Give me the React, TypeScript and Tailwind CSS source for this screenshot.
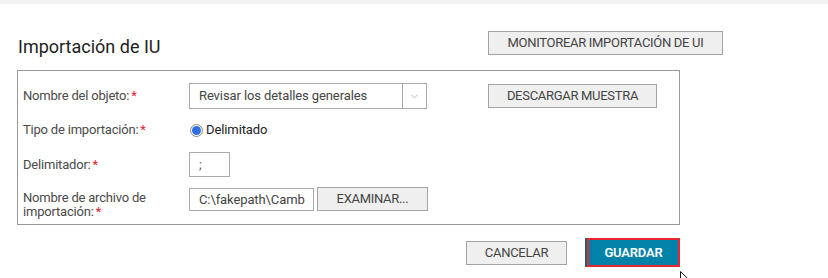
import { ChevronDown } from "lucide-react";

const font = "font-['Roboto','Liberation_Sans',sans-serif]";

function Label({ text, lines }: { text: React.ReactNode; lines?: boolean }) {
  return (
    <div
      className={`w-[171px] shrink-0 pl-[5px] text-[13px] tracking-[-0.2px] text-[#4a4a4a] ${
        lines ? "mt-[4px] leading-[14px]" : ""
      }`}
    >
      {text}
      <span className="ml-[2px] text-[#e3262f]">*</span>
    </div>
  );
}

function GrayButton({ children, className }: { children: React.ReactNode; className: string }) {
  return (
    <button
      className={`h-[24px] shrink-0 border border-[#a3a3a3] bg-[#efefef] text-[13px] tracking-[-0.3px] text-[#444] ${className}`}
    >
      {children}
    </button>
  );
}

export default function App() {
  return (
    <div className={`relative min-h-screen bg-white ${font}`}>
      <div className="h-[4px] bg-[#f2f2f2]" />

      <div className="pl-[17px]">
        <div className="mt-[27px] flex h-[24px] items-center">
          <h1 className="w-[471px] shrink-0 pl-[1px] pt-[6px] text-[18px] font-normal text-[#222]">
            Importación de IU
          </h1>
          <GrayButton className="w-[235px]">MONITOREAR IMPORTACIÓN DE UI</GrayButton>
        </div>

        <div className="mt-[15px] w-[663px] border border-[#999] pb-[5px] pt-[12px]">
          <div className="flex h-[26px] items-center">
            <Label text="Nombre del objeto:" />
            <div className="flex h-[26px] w-[238px] border border-[#aaa] text-[13px] text-[#444]">
              <div className="flex flex-1 items-center pl-[9px] tracking-[-0.1px]">
                Revisar los detalles generales
              </div>
              <div className="flex w-[24px] items-center justify-center border-l border-[#aaa]">
                <ChevronDown size={11} strokeWidth={1.5} className="text-[#999]" />
              </div>
            </div>
            <GrayButton className="ml-[61px] w-[169px]">DESCARGAR MUESTRA</GrayButton>
          </div>

          <div className="mt-[8px] flex h-[26px] items-center">
            <Label text="Tipo de importación:" />
            <div className="flex items-center text-[13px] text-[#222]">
              <span className="ml-[1px] flex h-[13px] w-[13px] items-center justify-center rounded-full border border-[#8a8a8a] bg-white">
                <span className="h-[9px] w-[9px] rounded-full bg-[#2f6fe0]" />
              </span>
              <span className="ml-[3px] tracking-[-0.1px]">Delimitado</span>
            </div>
          </div>

          <div className="mt-[9px] flex h-[25px] items-center">
            <Label text="Delimitador:" />
            <div className="flex h-[25px] w-[41px] items-center border border-[#aaa] pl-[9px] text-[13px] text-[#555]">
              ;
            </div>
          </div>

          <div className="mt-[10px] flex items-start">
            <Label
              lines
              text={
                <>
                  Nombre de archivo de
                  <br />
                  importación:
                </>
              }
            />
            <div className="mt-[1px] flex h-[23px] w-[125px] items-center overflow-hidden whitespace-nowrap border border-[#aaa] pl-[9px] text-[13px] tracking-[-0.1px] text-[#444]">
              C:\fakepath\Camb
            </div>
            <GrayButton className="ml-[3px] w-[111px]">EXAMINAR...</GrayButton>
          </div>
        </div>

        <div className="mt-[13px] flex w-[663px] items-center justify-end gap-[20px]">
          <GrayButton className="w-[101px]">CANCELAR</GrayButton>
          <button className="h-[29px] w-[93px] border-2 border-[#e8262f] bg-[#0282a9] text-[13px] font-semibold tracking-[-0.2px] text-white shadow-[-2px_0_0_#1f5f80]">
            GUARDAR
          </button>
        </div>
      </div>

      <svg className="absolute left-[680px] top-[271px]" width="12" height="19" viewBox="0 0 12 19">
        <path d="M0.5 0.5 L0.5 15 L4 11.5 L6.5 17.5 L8.5 16.5 L6 10.8 L11 10.8 Z" fill="white" stroke="#111" strokeWidth="1" />
      </svg>
    </div>
  );
}
